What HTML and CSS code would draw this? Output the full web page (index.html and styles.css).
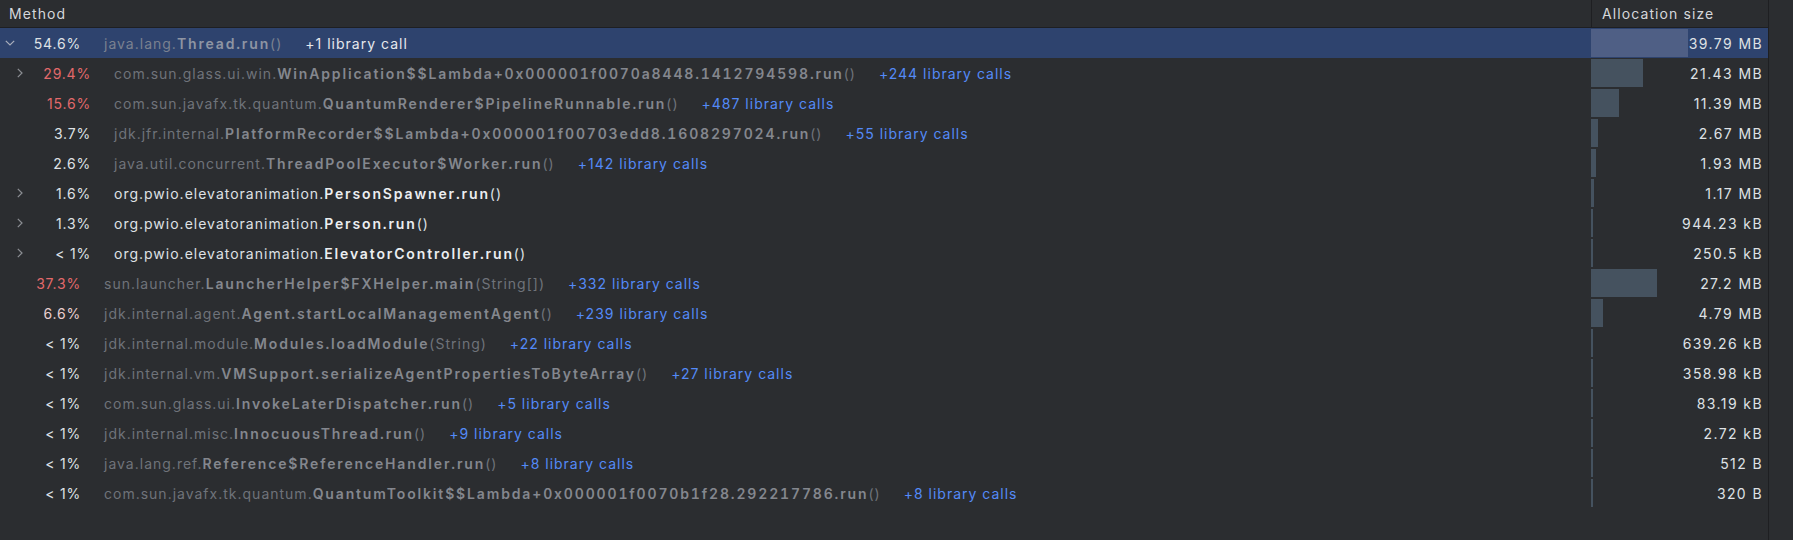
FILE: index.html
```html
<!DOCTYPE html>
<html>
<head>
<meta charset="utf-8">
<link rel="stylesheet" href="styles.css">
</head>
<body>
<div class="table">
  <div class="header">
    <div class="hcell hmethod">Method</div>
    <div class="hcell halloc">Allocation size</div>
  </div>

  <div class="row sel">
    <div class="mcell l0">
      <span class="chev"><svg width="10" height="6" viewBox="0 0 10 6"><polyline points="0.8,0.8 5,5 9.2,0.8" fill="none" stroke="#a9aebb" stroke-width="1.2"/></svg></span>
      <span class="pct">54.6%</span>
      <span class="sig lib"><span class="pkg">java.lang.</span><b>Thread.run</b><span class="pkg">()</span></span>
      <span class="calls">+1 library call</span>
    </div>
    <div class="acell"><div class="bar" style="width:54.6%"></div><span class="size">39.79 MB</span></div>
  </div>

  <div class="row">
    <div class="mcell l1">
      <span class="chev"><svg width="6" height="10" viewBox="0 0 6 10"><polyline points="0.8,0.8 5,5 0.8,9.2" fill="none" stroke="#8c8f94" stroke-width="1.2"/></svg></span>
      <span class="pct red">29.4%</span>
      <span class="sig lib"><span class="pkg">com.sun.glass.ui.win.</span><b>WinApplication$$Lambda+0x000001f0070a8448.1412794598.run</b><span class="pkg">()</span></span>
      <span class="calls">+244 library calls</span>
    </div>
    <div class="acell"><div class="bar" style="width:29.4%"></div><span class="size">21.43 MB</span></div>
  </div>

  <div class="row">
    <div class="mcell l1">
      <span class="chev"></span>
      <span class="pct red">15.6%</span>
      <span class="sig lib"><span class="pkg">com.sun.javafx.tk.quantum.</span><b>QuantumRenderer$PipelineRunnable.run</b><span class="pkg">()</span></span>
      <span class="calls">+487 library calls</span>
    </div>
    <div class="acell"><div class="bar" style="width:15.6%"></div><span class="size">11.39 MB</span></div>
  </div>

  <div class="row">
    <div class="mcell l1">
      <span class="chev"></span>
      <span class="pct">3.7%</span>
      <span class="sig lib"><span class="pkg">jdk.jfr.internal.</span><b>PlatformRecorder$$Lambda+0x000001f00703edd8.1608297024.run</b><span class="pkg">()</span></span>
      <span class="calls">+55 library calls</span>
    </div>
    <div class="acell"><div class="bar" style="width:3.7%"></div><span class="size">2.67 MB</span></div>
  </div>

  <div class="row">
    <div class="mcell l1">
      <span class="chev"></span>
      <span class="pct">2.6%</span>
      <span class="sig lib"><span class="pkg">java.util.concurrent.</span><b>ThreadPoolExecutor$Worker.run</b><span class="pkg">()</span></span>
      <span class="calls">+142 library calls</span>
    </div>
    <div class="acell"><div class="bar" style="width:2.6%"></div><span class="size">1.93 MB</span></div>
  </div>

  <div class="row">
    <div class="mcell l1">
      <span class="chev"><svg width="6" height="10" viewBox="0 0 6 10"><polyline points="0.8,0.8 5,5 0.8,9.2" fill="none" stroke="#8c8f94" stroke-width="1.2"/></svg></span>
      <span class="pct">1.6%</span>
      <span class="sig user"><span class="pkg">org.pwio.elevatoranimation.</span><b>PersonSpawner.run</b><span class="pkg">()</span></span>
    </div>
    <div class="acell"><div class="bar" style="width:1.6%"></div><span class="size">1.17 MB</span></div>
  </div>

  <div class="row">
    <div class="mcell l1">
      <span class="chev"><svg width="6" height="10" viewBox="0 0 6 10"><polyline points="0.8,0.8 5,5 0.8,9.2" fill="none" stroke="#8c8f94" stroke-width="1.2"/></svg></span>
      <span class="pct">1.3%</span>
      <span class="sig user"><span class="pkg">org.pwio.elevatoranimation.</span><b>Person.run</b><span class="pkg">()</span></span>
    </div>
    <div class="acell"><div class="bar" style="width:1.3%"></div><span class="size">944.23 kB</span></div>
  </div>

  <div class="row">
    <div class="mcell l1">
      <span class="chev"><svg width="6" height="10" viewBox="0 0 6 10"><polyline points="0.8,0.8 5,5 0.8,9.2" fill="none" stroke="#8c8f94" stroke-width="1.2"/></svg></span>
      <span class="pct">&lt; 1%</span>
      <span class="sig user"><span class="pkg">org.pwio.elevatoranimation.</span><b>ElevatorController.run</b><span class="pkg">()</span></span>
    </div>
    <div class="acell"><div class="bar" style="width:1.1%"></div><span class="size">250.5 kB</span></div>
  </div>

  <div class="row">
    <div class="mcell l0">
      <span class="chev"></span>
      <span class="pct red">37.3%</span>
      <span class="sig lib"><span class="pkg">sun.launcher.</span><b>LauncherHelper$FXHelper.main</b><span class="pkg">(String[])</span></span>
      <span class="calls">+332 library calls</span>
    </div>
    <div class="acell"><div class="bar" style="width:37.3%"></div><span class="size">27.2 MB</span></div>
  </div>

  <div class="row">
    <div class="mcell l0">
      <span class="chev"></span>
      <span class="pct pink">6.6%</span>
      <span class="sig lib"><span class="pkg">jdk.internal.agent.</span><b>Agent.startLocalManagementAgent</b><span class="pkg">()</span></span>
      <span class="calls">+239 library calls</span>
    </div>
    <div class="acell"><div class="bar" style="width:6.6%"></div><span class="size">4.79 MB</span></div>
  </div>

  <div class="row">
    <div class="mcell l0">
      <span class="chev"></span>
      <span class="pct">&lt; 1%</span>
      <span class="sig lib"><span class="pkg">jdk.internal.module.</span><b>Modules.loadModule</b><span class="pkg">(String)</span></span>
      <span class="calls">+22 library calls</span>
    </div>
    <div class="acell"><div class="bar" style="width:1.1%"></div><span class="size">639.26 kB</span></div>
  </div>

  <div class="row">
    <div class="mcell l0">
      <span class="chev"></span>
      <span class="pct">&lt; 1%</span>
      <span class="sig lib"><span class="pkg">jdk.internal.vm.</span><b>VMSupport.serializeAgentPropertiesToByteArray</b><span class="pkg">()</span></span>
      <span class="calls">+27 library calls</span>
    </div>
    <div class="acell"><div class="bar" style="width:1.1%"></div><span class="size">358.98 kB</span></div>
  </div>

  <div class="row">
    <div class="mcell l0">
      <span class="chev"></span>
      <span class="pct">&lt; 1%</span>
      <span class="sig lib"><span class="pkg">com.sun.glass.ui.</span><b>InvokeLaterDispatcher.run</b><span class="pkg">()</span></span>
      <span class="calls">+5 library calls</span>
    </div>
    <div class="acell"><div class="bar" style="width:1.1%"></div><span class="size">83.19 kB</span></div>
  </div>

  <div class="row">
    <div class="mcell l0">
      <span class="chev"></span>
      <span class="pct">&lt; 1%</span>
      <span class="sig lib"><span class="pkg">jdk.internal.misc.</span><b>InnocuousThread.run</b><span class="pkg">()</span></span>
      <span class="calls">+9 library calls</span>
    </div>
    <div class="acell"><div class="bar" style="width:1.1%"></div><span class="size">2.72 kB</span></div>
  </div>

  <div class="row">
    <div class="mcell l0">
      <span class="chev"></span>
      <span class="pct">&lt; 1%</span>
      <span class="sig lib"><span class="pkg">java.lang.ref.</span><b>Reference$ReferenceHandler.run</b><span class="pkg">()</span></span>
      <span class="calls">+8 library calls</span>
    </div>
    <div class="acell"><div class="bar" style="width:1.1%"></div><span class="size">512 B</span></div>
  </div>

  <div class="row">
    <div class="mcell l0">
      <span class="chev"></span>
      <span class="pct">&lt; 1%</span>
      <span class="sig lib"><span class="pkg">com.sun.javafx.tk.quantum.</span><b>QuantumToolkit$$Lambda+0x000001f0070b1f28.292217786.run</b><span class="pkg">()</span></span>
      <span class="calls">+8 library calls</span>
    </div>
    <div class="acell"><div class="bar" style="width:1.1%"></div><span class="size">320 B</span></div>
  </div>
</div>
</body>
</html>
```

FILE: styles.css
```css
* { box-sizing: border-box; }

html, body {
  margin: 0;
  padding: 0;
  background: #2b2d30;
  height: 100%;
  overflow: hidden;
}

body {
  font-family: Inter, "Noto Sans", sans-serif;
  font-size: 14px;
  letter-spacing: 1px;
  color: #dfe1e5;
}

.table {
  width: 1769px;
  height: 540px;
  border-right: 1px solid #1e1f22;
  display: flex;
  flex-direction: column;
}

.header {
  display: grid;
  grid-template-columns: 1591px 177px;
  height: 28px;
  border-bottom: 1px solid #1e1f22;
}

.hcell {
  display: flex;
  align-items: center;
  color: #d5d7db;
  padding-bottom: 1px;
  letter-spacing: 1.1px;
}

.hmethod { padding-left: 9px; }

.halloc {
  border-left: 1px solid #1e1f22;
  padding-left: 10px;
}

.row {
  display: grid;
  grid-template-columns: 1591px 177px;
  height: 30px;
}

.row.sel { background: #2e436e; }

.mcell {
  display: flex;
  align-items: center;
  white-space: nowrap;
  overflow: hidden;
}

.mcell.l1 { padding-left: 10px; }

.chev {
  width: 19px;
  flex: none;
  display: flex;
  justify-content: center;
  align-items: center;
}

.chev svg { display: block; }

.pct {
  width: 62px;
  flex: none;
  text-align: right;
  color: #dfe1e5;
  letter-spacing: 0.8px;
}

.pct.red { color: #e2696b; }
.pct.pink { color: #e9cfcf; }

.sig { margin-left: 23px; }

.sig b {
  font-weight: 600;
  letter-spacing: 1.85px;
  font-variant-numeric: tabular-nums;
}

.lib .pkg { color: #6f737a; }
.lib b { color: #84878e; }

.user .pkg { color: #dfe1e5; }
.user b { color: #eceef1; }

.calls {
  margin-left: 23px;
  color: #548af7;
}

.sel .calls { color: #e6e8ec; }
.sel .lib .pkg { color: #7a8190; }
.sel .lib b { color: #8e95a3; }

.acell {
  display: grid;
  align-items: center;
}

.acell > * { grid-area: 1 / 1; }

.bar {
  height: 28px;
  min-width: 2px;
  background: #45525f;
  align-self: center;
}

.sel .bar { background: #4f5f85; }

.size {
  justify-self: end;
  padding-right: 5px;
  letter-spacing: 1.4px;
  color: #dfe1e5;
}
```
